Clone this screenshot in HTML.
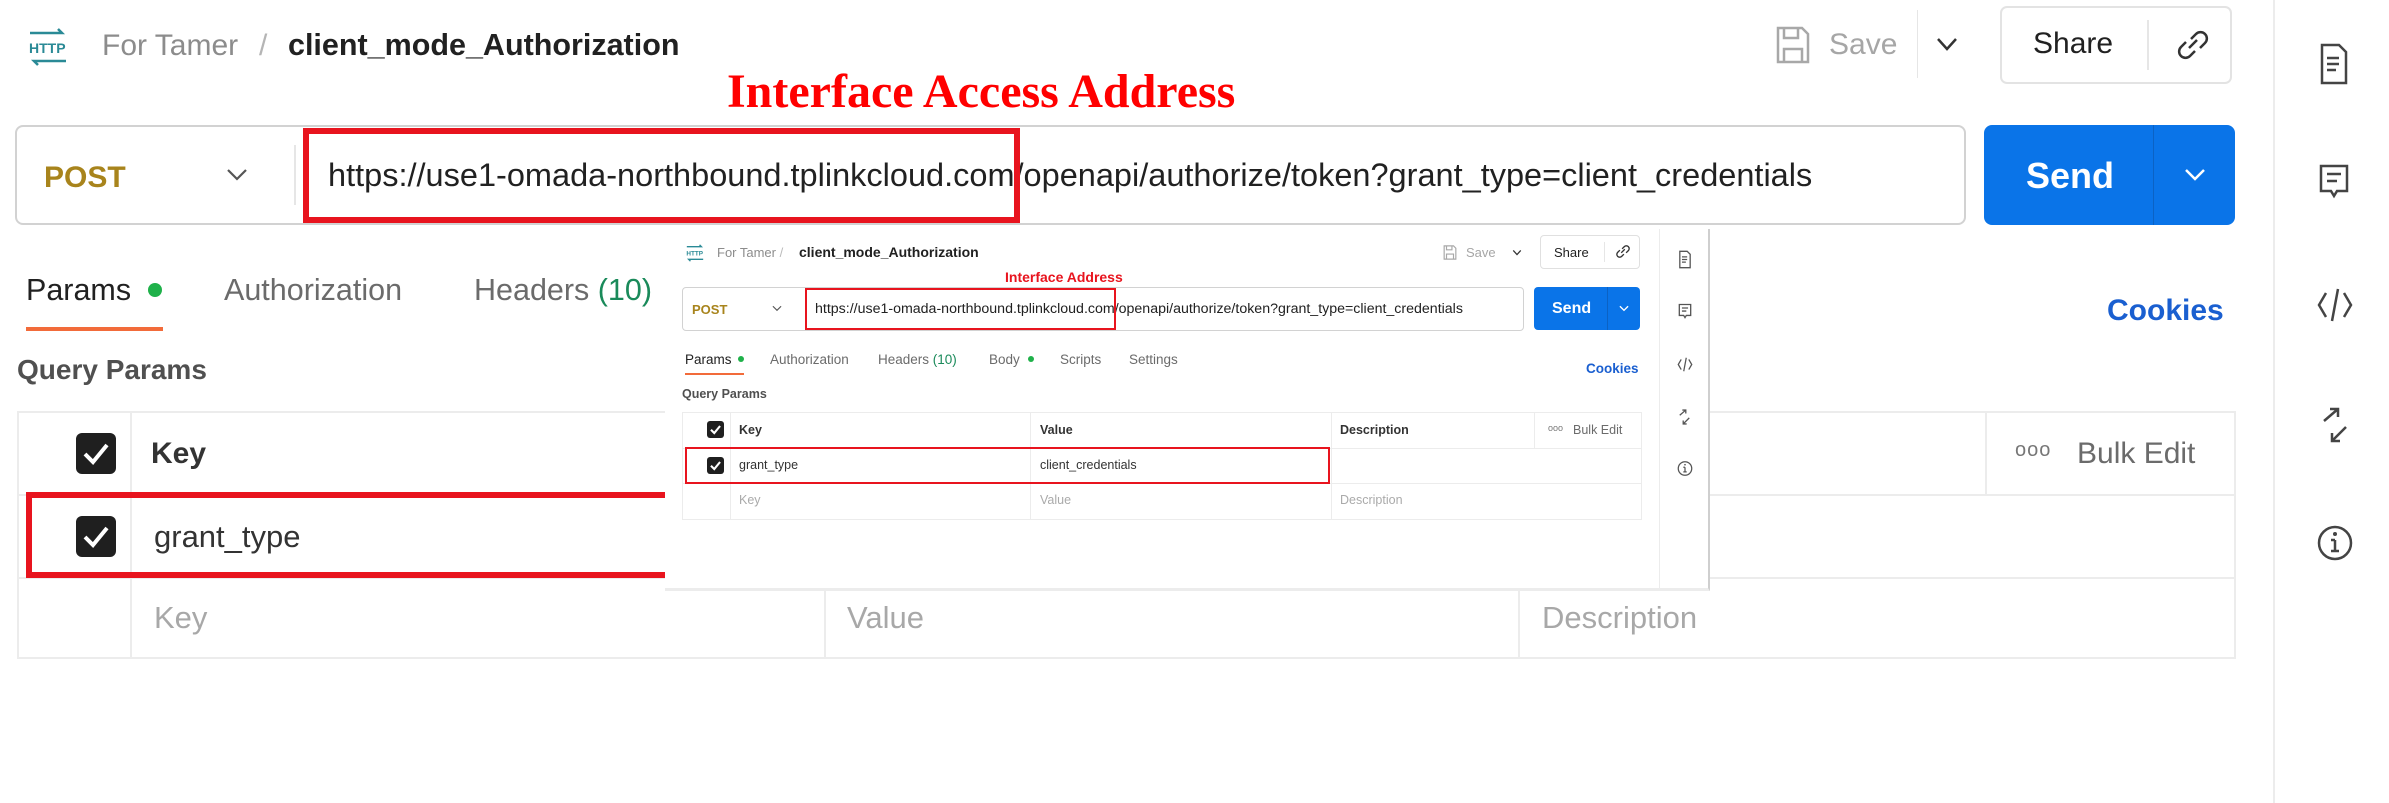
<!DOCTYPE html>
<html><head><meta charset="utf-8"><style>
*{margin:0;padding:0;box-sizing:border-box}
body{width:2389px;height:803px;background:#fff;position:relative;overflow:hidden;font-family:"Liberation Sans",sans-serif;color:#212121}
.a{position:absolute;white-space:nowrap;line-height:1}
.ln{position:absolute;background:#e6e6e6}
.cb{position:absolute;background:#1f1f1f;border-radius:6px}
.cb svg{position:absolute;left:0;top:0;width:100%;height:100%}
</style></head><body>

<!-- main header -->
<svg class="a" style="left:26px;top:28px" width="44" height="38" viewBox="0 0 44 38"><path d="M4 5h32l-4-4M40 33H8l4 4" stroke="#2a8a96" stroke-width="2.5" fill="none"/><text x="3" y="25" font-family="Liberation Sans" font-size="14" font-weight="bold" fill="#2a8a96">HTTP</text></svg>
<div class="a" style="left:102px;top:31px;font-size:30px;color:#8c8c8c">For Tamer</div>
<div class="a" style="left:259px;top:31px;font-size:30px;color:#b5b5b5">/</div>
<div class="a" style="left:288px;top:30px;font-size:30.5px;font-weight:bold;color:#212121">client_mode_Authorization</div>

<svg class="a" style="left:1775px;top:25px" width="36" height="40" viewBox="0 0 36 40"><path d="M3 3h24l6 6v28H3z M9 3v10h14V3 M9 37V24h18v13" stroke="#a8a8a8" stroke-width="2.5" fill="none"/></svg>
<div class="a" style="left:1829px;top:30px;font-size:30px;color:#a6a6a6">Save</div>
<div class="ln" style="left:1917px;top:10px;width:1px;height:68px"></div>
<svg class="a" style="left:1935px;top:36px" width="24" height="16" viewBox="0 0 24 16"><path d="M3 3l9 10 9-10" stroke="#333" stroke-width="2.5" fill="none"/></svg>
<div class="a" style="left:2000px;top:6px;width:232px;height:78px;border:2px solid #e3e3e3;border-radius:7px"></div>
<div class="a" style="left:2033px;top:29px;font-size:30px;color:#212121">Share</div>
<div class="ln" style="left:2147px;top:20px;width:2px;height:50px"></div>
<svg class="a" style="left:2175px;top:26px" width="36" height="38" viewBox="0 0 36 38"><path d="M14 22l8-8 M11 16l-5 5a6 6 0 0 0 9 9l5-5 M25 22l5-5a6 6 0 0 0-9-9l-5 5" stroke="#333" stroke-width="2.5" fill="none"/></svg>

<div class="ln" style="left:2273px;top:0;width:2px;height:803px;background:#ececec"></div>
<!-- sidebar icons -->
<svg class="a" style="left:2319px;top:42px" width="30" height="44" viewBox="0 0 30 44"><path d="M3 3h17l7 7v31H3z M8 16h12 M8 22h12 M8 28h9" stroke="#444" stroke-width="2.5" fill="none"/></svg>
<svg class="a" style="left:2318px;top:163px" width="32" height="38" viewBox="0 0 32 38"><path d="M3 3h26v25H19l-3 5-3-5H3z M9 11h14 M9 18h10" stroke="#444" stroke-width="2.5" fill="none"/></svg>
<svg class="a" style="left:2316px;top:285px" width="38" height="40" viewBox="0 0 38 40"><path d="M10 8L3 20l7 12 M28 8l7 12-7 12 M22 4l-6 32" stroke="#444" stroke-width="2.5" fill="none"/></svg>
<svg class="a" style="left:2320px;top:407px" width="30" height="36" viewBox="0 0 30 36"><path d="M4 14L18 2 M10 2h8v8 M26 20L12 34 M12 26v8h8" stroke="#444" stroke-width="2.5" fill="none"/></svg>
<svg class="a" style="left:2316px;top:523px" width="38" height="40" viewBox="0 0 38 40"><circle cx="19" cy="20" r="16" stroke="#444" stroke-width="2.5" fill="none"/><path d="M19 17v11 M15 28h8 M15 17h4" stroke="#444" stroke-width="2.5"/><circle cx="19" cy="11" r="2" fill="#444"/></svg>

<!-- url bar -->
<div class="a" style="left:15px;top:125px;width:1951px;height:100px;border:2px solid #d2d2d2;border-radius:8px"></div>
<div class="a" style="left:44px;top:163px;font-size:30px;font-weight:bold;color:#a8841c">POST</div>
<svg class="a" style="left:226px;top:168px" width="22" height="14" viewBox="0 0 22 14"><path d="M2 2l9 9 9-9" stroke="#555" stroke-width="2.2" fill="none"/></svg>
<div class="ln" style="left:294px;top:145px;width:2px;height:60px"></div>
<div class="a" style="left:328px;top:159px;font-size:32.5px;color:#212121">https://use1-omada-northbound.tplinkcloud.com/openapi/authorize/token?grant_type=client_credentials</div>
<div class="a" style="left:303px;top:128px;width:717px;height:95px;border:6px solid #e8141e"></div>
<div class="a" style="left:727px;top:68px;font-family:'Liberation Serif',serif;font-weight:bold;font-size:48px;color:#ff0000">Interface Access Address</div>

<div class="a" style="left:1984px;top:125px;width:251px;height:100px;background:#0a74e8;border-radius:8px"></div>
<div class="a" style="left:2153px;top:125px;width:1px;height:100px;background:#0b62c4"></div>
<div class="a" style="left:2026px;top:158px;font-size:36px;font-weight:bold;color:#fff">Send</div>
<svg class="a" style="left:2184px;top:168px" width="22" height="14" viewBox="0 0 22 14"><path d="M2 2l9 9 9-9" stroke="#fff" stroke-width="2.5" fill="none"/></svg>

<!-- tabs -->
<div class="a" style="left:26px;top:275px;font-size:30.5px;color:#212121">Params</div>
<div class="a" style="left:148px;top:283px;width:14px;height:14px;border-radius:50%;background:#1fb14a"></div>
<div class="a" style="left:26px;top:327px;width:137px;height:4px;background:#f26b3a"></div>
<div class="a" style="left:224px;top:275px;font-size:30.5px;color:#6b6b6b">Authorization</div>
<div class="a" style="left:474px;top:275px;font-size:30.5px;color:#6b6b6b">Headers <span style="color:#1a8a5a">(10)</span></div>
<div class="a" style="left:2107px;top:296px;font-size:30px;font-weight:bold;color:#1a5fd0">Cookies</div>
<div class="a" style="left:17px;top:356px;font-size:28px;font-weight:bold;color:#505050">Query Params</div>

<!-- main table -->
<div class="a" style="left:17px;top:411px;width:2219px;height:248px;border:2px solid #ececec"></div>
<div class="ln" style="left:17px;top:494px;width:2219px;height:2px;background:#ececec"></div>
<div class="ln" style="left:17px;top:577px;width:2219px;height:2px;background:#ececec"></div>
<div class="ln" style="left:130px;top:411px;width:2px;height:248px;background:#ececec"></div>
<div class="ln" style="left:824px;top:577px;width:2px;height:82px;background:#ececec"></div>
<div class="ln" style="left:1518px;top:411px;width:2px;height:83px;background:#ececec"></div>
<div class="ln" style="left:1518px;top:577px;width:2px;height:82px;background:#ececec"></div>
<div class="ln" style="left:1985px;top:411px;width:2px;height:83px;background:#ececec"></div>
<div class="cb" style="left:76px;top:433px;width:40px;height:41px"><svg viewBox="0 0 40 41"><path d="M9 21l8 8 14-17" stroke="#fff" stroke-width="4" fill="none"/></svg></div>
<div class="a" style="left:151px;top:439px;font-size:30px;font-weight:bold;color:#333">Key</div>
<div class="cb" style="left:76px;top:516px;width:40px;height:41px"><svg viewBox="0 0 40 41"><path d="M9 21l8 8 14-17" stroke="#fff" stroke-width="4" fill="none"/></svg></div>
<div class="a" style="left:154px;top:521px;font-size:31px;color:#333">grant_type</div>
<div class="a" style="left:26px;top:492px;width:720px;height:86px;border:6px solid #e8141e"></div>
<div class="a" style="left:154px;top:602px;font-size:31px;color:#a8a8a8">Key</div>
<div class="a" style="left:847px;top:602px;font-size:31px;color:#a8a8a8">Value</div>
<div class="a" style="left:1542px;top:602px;font-size:31px;color:#a8a8a8">Description</div>
<div class="a" style="left:2015px;top:440px;font-size:20px;color:#777;letter-spacing:1px">ooo</div>
<div class="a" style="left:2077px;top:439px;font-size:30px;color:#6b6b6b">Bulk Edit</div>

<!-- overlay screenshot -->
<div class="a" style="left:665px;top:229px;width:1045px;height:362px;background:#fff;border-right:2px solid #cfcfcf;border-bottom:3px solid #ececec"></div>
<div class="ln" style="left:1659px;top:229px;width:1px;height:360px;background:#ececec"></div>
<svg class="a" style="left:685px;top:243px" width="20" height="20" viewBox="0 0 44 38"><path d="M4 5h32l-4-4M40 33H8l4 4" stroke="#2a8a96" stroke-width="3" fill="none"/><text x="3" y="25" font-family="Liberation Sans" font-size="14" font-weight="bold" fill="#2a8a96">HTTP</text></svg>
<div class="a" style="left:717px;top:246px;font-size:13px;color:#8c8c8c">For Tamer  <span style="color:#bbb">/</span></div>
<div class="a" style="left:799px;top:245px;font-size:14px;font-weight:bold;color:#212121">client_mode_Authorization</div>
<svg class="a" style="left:1443px;top:244px" width="14" height="17" viewBox="0 0 36 40"><path d="M3 3h24l6 6v28H3z M9 3v10h14V3 M9 37V24h18v13" stroke="#a8a8a8" stroke-width="3" fill="none"/></svg>
<div class="a" style="left:1466px;top:246px;font-size:13px;color:#a6a6a6">Save</div>
<svg class="a" style="left:1512px;top:249px" width="10" height="7" viewBox="0 0 24 16"><path d="M3 3l9 10 9-10" stroke="#333" stroke-width="3" fill="none"/></svg>
<div class="a" style="left:1540px;top:235px;width:100px;height:34px;border:1px solid #e0e0e0;border-radius:4px"></div>
<div class="a" style="left:1554px;top:246px;font-size:13px;color:#212121">Share</div>
<div class="ln" style="left:1604px;top:242px;width:1px;height:20px"></div>
<svg class="a" style="left:1615px;top:243px" width="16" height="17" viewBox="0 0 36 38"><path d="M14 22l8-8 M11 16l-5 5a6 6 0 0 0 9 9l5-5 M25 22l5-5a6 6 0 0 0-9-9l-5 5" stroke="#333" stroke-width="3" fill="none"/></svg>
<div class="a" style="left:1005px;top:270px;font-size:14px;font-weight:bold;color:#e8141e">Interface Address</div>
<div class="a" style="left:682px;top:287px;width:842px;height:44px;border:1px solid #d2d2d2;border-radius:4px"></div>
<div class="a" style="left:692px;top:303px;font-size:13px;font-weight:bold;color:#a8841c">POST</div>
<svg class="a" style="left:772px;top:305px" width="10" height="7" viewBox="0 0 22 14"><path d="M2 2l9 9 9-9" stroke="#555" stroke-width="2.5" fill="none"/></svg>
<div class="a" style="left:815px;top:302px;font-size:14.2px;color:#212121">https://use1-omada-northbound.tplinkcloud.com/openapi/authorize/token?grant_type=client_credentials</div>
<div class="a" style="left:805px;top:288px;width:311px;height:42px;border:2px solid #e8141e"></div>
<div class="a" style="left:1534px;top:287px;width:106px;height:43px;background:#0a74e8;border-radius:4px"></div>
<div class="a" style="left:1607px;top:287px;width:1px;height:43px;background:#0b62c4"></div>
<div class="a" style="left:1552px;top:301px;font-size:16px;font-weight:bold;color:#fff">Send</div>
<svg class="a" style="left:1619px;top:305px" width="10" height="7" viewBox="0 0 22 14"><path d="M2 2l9 9 9-9" stroke="#fff" stroke-width="3" fill="none"/></svg>
<div class="a" style="left:685px;top:353px;font-size:13.5px;color:#212121">Params</div>
<div class="a" style="left:738px;top:356px;width:6px;height:6px;border-radius:50%;background:#1fb14a"></div>
<div class="a" style="left:685px;top:373px;width:59px;height:2px;background:#f26b3a"></div>
<div class="a" style="left:770px;top:353px;font-size:13.5px;color:#6b6b6b">Authorization</div>
<div class="a" style="left:878px;top:353px;font-size:13.5px;color:#6b6b6b">Headers <span style="color:#1a8a5a">(10)</span></div>
<div class="a" style="left:989px;top:353px;font-size:13.5px;color:#6b6b6b">Body</div>
<div class="a" style="left:1028px;top:356px;width:6px;height:6px;border-radius:50%;background:#1fb14a"></div>
<div class="a" style="left:1060px;top:353px;font-size:13.5px;color:#6b6b6b">Scripts</div>
<div class="a" style="left:1129px;top:353px;font-size:13.5px;color:#6b6b6b">Settings</div>
<div class="a" style="left:1586px;top:362px;font-size:13.5px;font-weight:bold;color:#1a5fd0">Cookies</div>
<div class="a" style="left:682px;top:388px;font-size:12.5px;font-weight:bold;color:#505050">Query Params</div>
<div class="a" style="left:682px;top:412px;width:960px;height:108px;border:1px solid #ececec"></div>
<div class="ln" style="left:682px;top:448px;width:960px;height:1px;background:#ececec"></div>
<div class="ln" style="left:682px;top:483px;width:960px;height:1px;background:#ececec"></div>
<div class="ln" style="left:730px;top:412px;width:1px;height:108px;background:#ececec"></div>
<div class="ln" style="left:1030px;top:412px;width:1px;height:108px;background:#ececec"></div>
<div class="ln" style="left:1331px;top:412px;width:1px;height:108px;background:#ececec"></div>
<div class="ln" style="left:1534px;top:412px;width:1px;height:36px;background:#ececec"></div>
<div class="cb" style="left:707px;top:421px;width:17px;height:17px;border-radius:3px"><svg viewBox="0 0 40 41"><path d="M9 21l8 8 14-17" stroke="#fff" stroke-width="5" fill="none"/></svg></div>
<div class="a" style="left:739px;top:424px;font-size:12.5px;font-weight:bold;color:#333">Key</div>
<div class="a" style="left:1040px;top:424px;font-size:12.5px;font-weight:bold;color:#333">Value</div>
<div class="a" style="left:1340px;top:424px;font-size:12.5px;font-weight:bold;color:#333">Description</div>
<div class="a" style="left:1548px;top:424px;font-size:9px;color:#777">ooo</div>
<div class="a" style="left:1573px;top:424px;font-size:12.5px;color:#6b6b6b">Bulk Edit</div>
<div class="cb" style="left:707px;top:457px;width:17px;height:17px;border-radius:3px"><svg viewBox="0 0 40 41"><path d="M9 21l8 8 14-17" stroke="#fff" stroke-width="5" fill="none"/></svg></div>
<div class="a" style="left:739px;top:459px;font-size:12.5px;color:#333">grant_type</div>
<div class="a" style="left:1040px;top:459px;font-size:12.5px;color:#333">client_credentials</div>
<div class="a" style="left:685px;top:447px;width:645px;height:37px;border:2px solid #e8141e"></div>
<div class="a" style="left:739px;top:494px;font-size:12.5px;color:#aaa">Key</div>
<div class="a" style="left:1040px;top:494px;font-size:12.5px;color:#aaa">Value</div>
<div class="a" style="left:1340px;top:494px;font-size:12.5px;color:#aaa">Description</div>
<svg class="a" style="left:1678px;top:250px" width="14" height="19" viewBox="0 0 30 44"><path d="M3 3h17l7 7v31H3z M8 16h12 M8 22h12 M8 28h9" stroke="#555" stroke-width="3" fill="none"/></svg>
<svg class="a" style="left:1678px;top:303px" width="14" height="17" viewBox="0 0 32 38"><path d="M3 3h26v25H19l-3 5-3-5H3z M9 11h14 M9 18h10" stroke="#555" stroke-width="3" fill="none"/></svg>
<svg class="a" style="left:1677px;top:356px" width="16" height="17" viewBox="0 0 38 40"><path d="M10 8L3 20l7 12 M28 8l7 12-7 12 M22 4l-6 32" stroke="#555" stroke-width="3" fill="none"/></svg>
<svg class="a" style="left:1678px;top:409px" width="13" height="16" viewBox="0 0 30 36"><path d="M4 14L18 2 M10 2h8v8 M26 20L12 34 M12 26v8h8" stroke="#555" stroke-width="3" fill="none"/></svg>
<svg class="a" style="left:1677px;top:460px" width="16" height="17" viewBox="0 0 38 40"><circle cx="19" cy="20" r="16" stroke="#555" stroke-width="3" fill="none"/><path d="M19 17v11 M15 28h8 M15 17h4" stroke="#555" stroke-width="3"/><circle cx="19" cy="11" r="2" fill="#555"/></svg>

</body></html>
